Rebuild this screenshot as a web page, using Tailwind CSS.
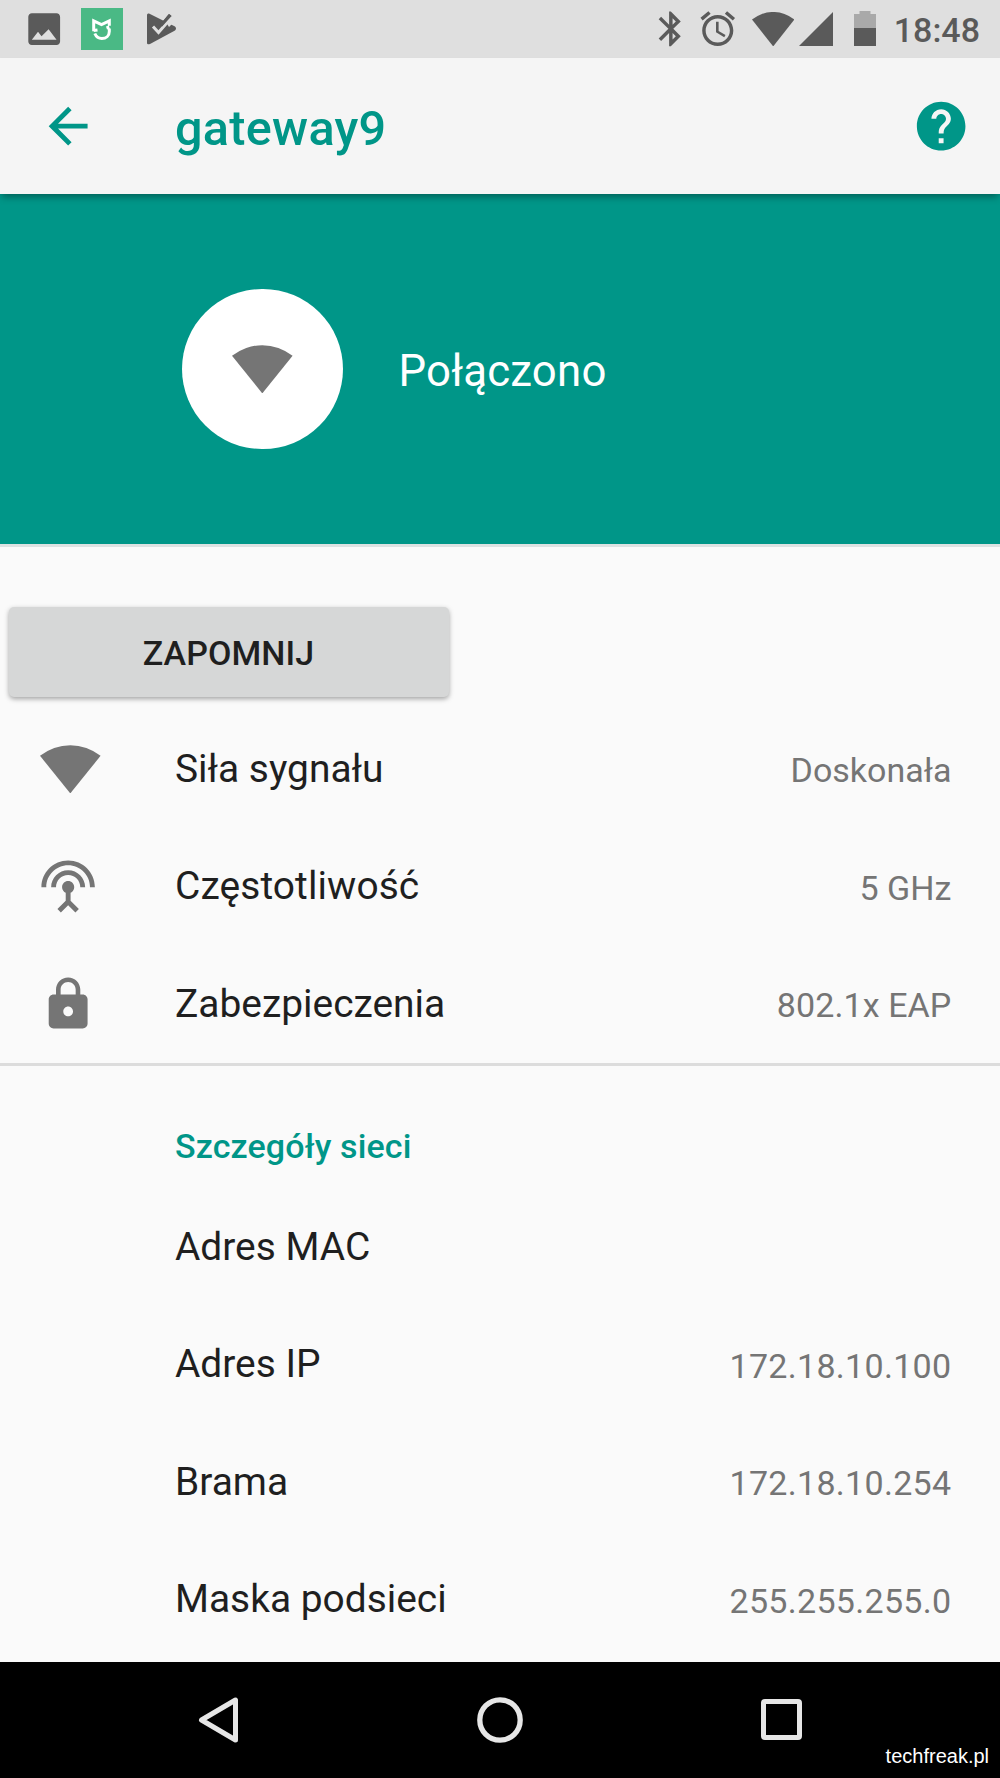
<!DOCTYPE html>
<html lang="pl">
<head>
<meta charset="utf-8">
<title>gateway9</title>
<script src="https://cdn.jsdelivr.net/npm/@tailwindcss/browser@4"></script>
</head>
<body class="w-[1000px] h-[1778px] overflow-hidden bg-[#fafafa] font-[Roboto,sans-serif] text-[38.9px] leading-none text-[#1f1f1f] flex flex-col">

<!-- Status bar -->
<div class="h-[58px] shrink-0 bg-[#dfdfdf] text-[#5a5a5a] flex justify-between">
  <div class="flex items-center pl-[23px]">
    <svg class="size-[42.4px]" viewBox="0 0 24 24" fill="currentColor"><path d="M21 19V5c0-1.1-.9-2-2-2H5c-1.1 0-2 .9-2 2v14c0 1.1.9 2 2 2h14c1.1 0 2-.9 2-2zM5 18l3.500-4.500 2 2.500L14.500 12l4.500 6z" fill-rule="evenodd"/></svg>
    <svg class="ml-4 w-[42px] h-[42px]" viewBox="0 0 42 42"><path d="M0 0h42v42H0z" fill="#4ab985"/><path d="M12.700 23.200V12.800L20.500 16.600L28.300 12.800V17.800M28.300 20.500V23.500C28.300 28 25 30.500 20.800 30.500C17.500 30.500 15.200 28.800 13.800 25.500M28.300 19L25.500 20M12.700 22.500L16.500 22" fill="none" stroke="#fff" stroke-width="3"/></svg>
    <svg class="ml-[23.500px] w-[30px] h-[32px]" viewBox="0 0 30 32"><path d="M0 2Q0 0 2 .5L28 13.500Q30 15.500 28 17.500L3 31Q0 32 0 30z" fill="currentColor"/><path d="M17 6L24 0L30 6L22 14z" fill="#dfdfdf"/><path d="M13 14.500L23 2" fill="none" stroke="currentColor" stroke-width="3.400"/><path d="M6 13.500l5.500 6L24.500 4.500" fill="none" stroke="#dfdfdf" stroke-width="3"/><path d="M14 12.500L23.500 2" fill="none" stroke="currentColor" stroke-width="3"/></svg>
  </div>
  <div class="flex items-center">
    <svg class="size-[41.7px]" viewBox="0 0 24 24" fill="currentColor"><path d="M17.710 7.710L12 2h-1v7.590L6.410 5 5 6.410 10.590 12 5 17.590 6.410 19 11 14.410V22h1l5.710-5.710-4.300-4.290 4.300-4.290zM13 5.830l1.880 1.880L13 9.590V5.830zm1.880 10.460L13 18.170v-3.760l1.880 1.880z"/></svg>
    <svg class="ml-[6px] size-[41.5px]" viewBox="0 0 24 24" fill="currentColor"><path d="M22 5.720l-4.600-3.860-1.290 1.530 4.600 3.860L22 5.720zM7.880 3.390L6.600 1.860 2 5.710l1.290 1.530 4.590-3.850zM12.500 8H11v6l4.750 2.850.75-1.230-4-2.370V8zM12 4c-4.970 0-9 4.030-9 9s4.020 9 9 9c4.970 0 9-4.030 9-9s-4.030-9-9-9zm0 16c-3.870 0-7-3.130-7-7s3.130-7 7-7 7 3.130 7 7-3.130 7-7 7z"/></svg>
    <svg class="ml-[13px] w-[42.400px] h-[34.400px]" viewBox="0 0 42.400 34.400" fill="currentColor"><path d="M0 7.500A33.600 33.600 0 0 1 42.400 7.500L21.200 34.400z"/></svg>
    <svg class="ml-[5px] w-[34px] h-[34px]" viewBox="0 0 34 34" fill="currentColor"><path d="M34 0V34H0z"/></svg>
    <svg class="ml-[20.500px] mb-[1px] w-[22px] h-[35px]" viewBox="0 0 22 35"><path d="M5.500 0h11v3H22v14H0V3h5.500z" fill="#a9a9a9"/><path d="M0 17h22v18H0z" fill="currentColor"/></svg>
    <span class="ml-[18px] mr-5 pt-[2px] text-[34px] font-medium">18:48</span>
  </div>
</div>

<!-- App bar -->
<div class="relative z-10 h-[136px] shrink-0 bg-[#f5f5f5] text-[#009688] flex items-center pl-[39px] pr-[30px] shadow-[0_5px_7px_-2px_rgba(0,0,0,0.350)]">
  <svg class="size-[58.300px]" viewBox="0 0 24 24" fill="currentColor"><path d="M20 11H7.830l5.590-5.590L12 4l-8 8 8 8 1.410-1.410L7.830 13H20v-2z"/></svg>
  <h1 class="ml-[77.700px] pt-[7px] text-[48.600px] font-medium tracking-[0.280px]">gateway9</h1>
  <svg class="ml-auto size-[58.300px]" viewBox="0 0 24 24" fill="currentColor"><path d="M12 2C6.480 2 2 6.480 2 12s4.480 10 10 10 10-4.480 10-10S17.520 2 12 2zm1 17h-2v-2h2v2zm2.070-7.750l-.9.920C13.450 12.900 13 13.500 13 15h-2v-.5c0-1.100.45-2.100 1.170-2.830l1.240-1.260c.37-.36.590-.86.590-1.410 0-1.100-.9-2-2-2s-2 .9-2 2H8c0-2.210 1.790-4 4-4s4 1.790 4 4c0 .88-.36 1.680-.93 2.250z"/></svg>
</div>

<!-- Connection header -->
<div class="h-[350px] shrink-0 bg-[#009688] flex items-center pl-[182px]">
  <div class="size-[160.500px] rounded-full bg-white flex items-center justify-center">
    <svg class="w-[60.600px] h-[48.400px]" viewBox="0 0 60.600 48.400" fill="#757575"><path d="M0 10.800A48.500 48.500 0 0 1 60.600 10.800L30.300 48.400z"/></svg>
  </div>
  <span class="ml-[56px] pt-[6px] text-[43.750px] tracking-[0.200px] text-white">Połączono</span>
</div>
<div class="h-[3px] shrink-0 bg-[#dce2e2]"></div>

<!-- Action -->
<div class="h-[163.500px] shrink-0 pt-[60px] pl-[9px]">
  <button class="block w-[440px] h-[89.500px] rounded-[5px] bg-[#d6d7d7] shadow-[0_2px_5px_rgba(0,0,0,0.350)] text-[34px] font-medium leading-none pt-[2px] pr-[1px] tracking-[0.100px]">ZAPOMNIJ</button>
</div>

<!-- Signal rows -->
<div class="h-[352.500px] shrink-0 grid grid-rows-3 text-[#1f1f1f]">
  <div class="flex items-center pl-[39px] pr-[48.600px]">
    <div class="w-[136px]"><svg class="ml-[1px] w-[60.600px] h-[48.400px]" viewBox="0 0 60.600 48.400" fill="#757575"><path d="M0 10.800A48.500 48.500 0 0 1 60.600 10.800L30.300 48.400z"/></svg></div>
    <span>Siła sygnału</span>
    <span class="ml-auto pt-[2px] text-[34px] text-[#757575]">Doskonała</span>
  </div>
  <div class="flex items-center pl-[39px] pr-[48.600px]">
    <div class="w-[136px]"><svg class="size-[58.300px]" viewBox="0 0 24 24" fill="#757575"><path d="M12 5c-3.870 0-7 3.130-7 7h2c0-2.760 2.240-5 5-5s5 2.240 5 5h2c0-3.870-3.130-7-7-7zm1 9.290c.88-.39 1.500-1.260 1.500-2.290 0-1.380-1.120-2.500-2.500-2.500S9.500 10.620 9.500 12c0 1.020.62 1.900 1.500 2.290v3.300L7.590 21 9 22.410l3-3 3 3L16.410 21 13 17.590v-3.300zM12 1C5.930 1 1 5.930 1 12h2c0-4.970 4.030-9 9-9s9 4.030 9 9h2c0-6.070-4.930-11-11-11z"/></svg></div>
    <span class="tracking-[0.100px]">Częstotliwość</span>
    <span class="ml-auto pt-[2px] text-[34px] text-[#757575]">5 GHz</span>
  </div>
  <div class="flex items-center pl-[39px] pr-[48.600px]">
    <div class="w-[136px]"><svg class="size-[58.300px]" viewBox="0 0 24 24" fill="#757575"><path d="M18 8h-1V6c0-2.760-2.240-5-5-5S7 3.240 7 6v2H6c-1.100 0-2 .9-2 2v10c0 1.100.9 2 2 2h12c1.100 0 2-.9 2-2V10c0-1.100-.9-2-2-2zm-6 9c-1.100 0-2-.9-2-2s.9-2 2-2 2 .9 2 2-.9 2-2 2zm3.100-9H8.900V6c0-1.710 1.390-3.100 3.100-3.100 1.710 0 3.100 1.390 3.100 3.100v2z"/></svg></div>
    <span>Zabezpieczenia</span>
    <span class="ml-auto pt-[2px] text-[34px] tracking-[0.100px] text-[#757575]">802.1x EAP</span>
  </div>
</div>
<div class="h-[3px] shrink-0 bg-[#dcdcdc]"></div>

<!-- Network details -->
<h2 class="h-[122.500px] shrink-0 pl-[175px] pt-[37px] flex items-center text-[34px] font-medium tracking-[0.130px] text-[#009688]">Szczegóły sieci</h2>
<div class="h-[470px] mb-[3px] shrink-0 grid grid-rows-4 pl-[175px] pr-[48.600px]">
  <div class="flex items-center justify-between"><span>Adres MAC</span></div>
  <div class="flex items-center justify-between"><span>Adres IP</span><span class="pt-[2px] text-[34px] tracking-[0.300px] text-[#757575]">172.18.10.100</span></div>
  <div class="flex items-center justify-between"><span>Brama</span><span class="pt-[2px] text-[34px] tracking-[0.300px] text-[#757575]">172.18.10.254</span></div>
  <div class="flex items-center justify-between"><span>Maska podsieci</span><span class="pt-[2px] text-[34px] tracking-[0.300px] text-[#757575]">255.255.255.0</span></div>
</div>

<!-- Navigation bar -->
<div class="relative flex-1 bg-black flex items-center pl-[198px]">
  <svg class="w-[42px] h-[48px]" viewBox="0 0 42 48" fill="none" stroke="#e6e6e6" stroke-width="5" stroke-linejoin="round"><path d="M37.500 4V44L3.500 24z"/></svg>
  <svg class="ml-[236px] size-[48px]" viewBox="0 0 48 48" fill="none" stroke="#e6e6e6" stroke-width="5.300"><circle cx="24" cy="24" r="20.200"/></svg>
  <div class="ml-[237px] size-[41px] rounded-[4px] border-5 border-[#e6e6e6]"></div>
  <span class="absolute right-[11px] bottom-[12px] font-['Liberation_Sans',sans-serif] text-[20px] text-white">techfreak.pl</span>
</div>
</body>
</html>
